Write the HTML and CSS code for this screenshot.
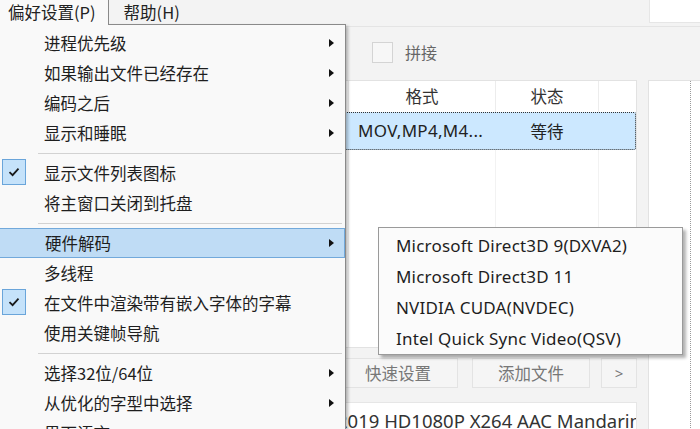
FILE: index.html
```html
<!DOCTYPE html>
<html lang="zh-CN">
<head>
<meta charset="utf-8">
<title>偏好设置</title>
<link rel="stylesheet" href="styles.css">
</head>
<body>
<div class="window">
  <div class="menubar">
    <div class="mb-item mb-open">偏好设置(P)</div>
    <div class="mb-item">帮助(H)</div>
    <div class="mb-search"></div>
  </div>
  <div class="content">
    <div class="main">
      <div class="toolbar"><span class="cb"></span><span class="cb-label">拼接</span></div>
      <div class="table">
        <div class="row thead">
          <div class="c c-name"></div><div class="c c-fmt">格式</div><div class="c c-st">状态</div><div class="c c-x"></div>
        </div>
        <div class="row sel">
          <div class="c c-name"></div><div class="c c-fmt left">MOV,MP4,M4...</div><div class="c c-st">等待</div><div class="c c-x"></div>
        </div>
        <div class="row fill">
          <div class="c c-name"></div><div class="c c-fmt"></div><div class="c c-st"></div><div class="c c-x"></div>
        </div>
      </div>
      <div class="buttons">
        <div class="btn b1">快速设置</div>
        <div class="btn b2">添加文件</div>
        <div class="btn b3">&gt;</div>
      </div>
      <div class="field">2019 HD1080P X264 AAC Mandarin</div>
    </div>
    <div class="side"><div class="side-inner"></div></div>
  </div>

  <div class="menu">
    <div class="mi sub">进程优先级</div>
    <div class="mi sub">如果输出文件已经存在</div>
    <div class="mi sub">编码之后</div>
    <div class="mi sub">显示和睡眠</div>
    <div class="sep"></div>
    <div class="mi checked"><span class="chk"><svg width="12" height="10" viewBox="0 0 12 10"><path d="M1.5 5.2 L4.6 8.2 L10.5 1.6" fill="none" stroke="#1a1a1a" stroke-width="1.8"/></svg></span>显示文件列表图标</div>
    <div class="mi">将主窗口关闭到托盘</div>
    <div class="sep"></div>
    <div class="mi sub hot">硬件解码</div>
    <div class="mi">多线程</div>
    <div class="mi checked"><span class="chk"><svg width="12" height="10" viewBox="0 0 12 10"><path d="M1.5 5.2 L4.6 8.2 L10.5 1.6" fill="none" stroke="#1a1a1a" stroke-width="1.8"/></svg></span>在文件中渲染带有嵌入字体的字幕</div>
    <div class="mi">使用关键帧导航</div>
    <div class="sep"></div>
    <div class="mi sub">选择32位/64位</div>
    <div class="mi sub">从优化的字型中选择</div>
    <div class="mi">界面语言</div>
  </div>

  <div class="submenu">
    <div class="si">Microsoft Direct3D 9(DXVA2)</div>
    <div class="si">Microsoft Direct3D 11</div>
    <div class="si">NVIDIA CUDA(NVDEC)</div>
    <div class="si">Intel Quick Sync Video(QSV)</div>
  </div>
</div>
</body>
</html>
```

FILE: styles.css
```css
html, body {
  margin: 0;
  padding: 0;
}
body {
  width: 700px;
  height: 429px;
  overflow: hidden;
  background: #f3f3f3;
  font-family: "Noto Sans", "Noto Sans CJK SC", sans-serif;
  color: #222;
}
.window {
  position: relative;
  width: 700px;
  height: 429px;
  overflow: hidden;
  background: #f3f3f3;
}
.menubar {
  display: flex;
  align-items: flex-start;
  height: 26px;
  border-bottom: 1px solid #e4e4e4;
  background: #f3f3f3;
  font-family: "Noto Sans CJK SC", sans-serif;
  font-size: 16.5px;
}
.mb-item {
  height: 24px;
  line-height: 24px;
  padding: 0 12px 0 15px;
  color: #222;
}
.mb-open {
  position: relative;
  z-index: 12;
  height: 25px;
  margin-left: -8px;
  padding: 0 12px 0 16px;
  background: #f9f9f9;
  border-right: 1px solid #8a8a8a;
}
.mb-search {
  margin-left: auto;
  width: 50px;
  height: 22px;
  background: #fff;
  border-left: 1px solid #e6e6e6;
  border-bottom: 1px solid #e6e6e6;
}
.content {
  display: grid;
  grid-template-columns: 637px 52px;
  column-gap: 11px;
  height: 402px;
}
.main {
  display: flex;
  flex-direction: column;
}
.toolbar {
  height: 53px;
  display: flex;
  align-items: center;
  padding-left: 372px;
  box-sizing: border-box;
  padding-bottom: 3px;
}
.cb {
  width: 19px;
  height: 19px;
  border: 1px solid #d4d4d4;
  background: #f7f7f7;
}
.cb-label {
  margin-left: 12px;
  font-family: "Noto Sans CJK SC", sans-serif;
  font-size: 16px;
  color: #666;
}
.table {
  height: 268px;
  display: flex;
  flex-direction: column;
  background: #fff;
  border: 1px solid #e2e2e2;
  box-sizing: border-box;
  font-family: "Noto Sans CJK SC", sans-serif;
  font-size: 16.5px;
}
.row {
  display: flex;
}
.c {
  box-sizing: border-box;
  text-align: center;
  border-right: 1px solid #ececec;
}
.c-name { width: 348px; }
.c-fmt { width: 147px; }
.c-st { width: 103px; }
.c-x { flex: 1; border-right: none; }
.thead {
  height: 31px;
  line-height: 31px;
  color: #333;
}
.sel {
  height: 38px;
  line-height: 38px;
  background: #cce8ff;
  outline: 1px dotted #333;
  outline-offset: -1px;
  border-radius: 2px;
}
.sel .c { border-right-color: transparent; }
.left {
  text-align: left;
  padding-left: 9px;
  font-family: "Noto Sans", "Noto Sans CJK SC", sans-serif;
  font-size: 17px;
  letter-spacing: 0.3px;
  white-space: nowrap;
}
.fill {
  flex: 1;
}
.fill .c { border-right-color: #f2f2f2; }
.buttons {
  display: flex;
  justify-content: flex-end;
  margin-top: 10px;
  height: 30px;
}
.btn {
  box-sizing: border-box;
  height: 30px;
  line-height: 28px;
  text-align: center;
  background: #f5f5f5;
  border: 1px solid #e3e3e3;
  color: #777;
  font-family: "Noto Sans CJK SC", sans-serif;
  font-size: 16.5px;
}
.b1 { width: 120px; }
.b2 { width: 118px; margin-left: 14px; }
.b3 { width: 36px; margin-left: 11px; font-family: "Noto Sans", sans-serif; font-size: 15px; }
.field {
  margin-top: 14px;
  height: 40px;
  background: #fff;
  border: 1px solid #e6e6e6;
  box-sizing: border-box;
  padding-left: 336px;
  line-height: 36px;
  font-family: "Noto Sans", sans-serif;
  font-size: 18.5px;
  color: #333;
  white-space: nowrap;
  overflow: hidden;
}
.side {
  margin-top: 53px;
  background: #fff;
  border-left: 1px solid #e2e2e2;
  border-top: 1px solid #e2e2e2;
}
.side-inner {
  margin-left: 41px;
  height: 100%;
  border-left: 1px dotted #9a9a9a;
}

/* popup menu */
.menu {
  position: absolute;
  z-index: 10;
  left: -2px;
  top: 24px;
  width: 348px;
  box-sizing: border-box;
  padding-top: 3px;
  padding-bottom: 20px;
  background: #f9f9f9;
  border: 1px solid #8a8a8a;
  box-shadow: 2px 2px 3px rgba(0, 0, 0, 0.28);
  font-family: "Noto Sans CJK SC", sans-serif;
  font-size: 16.5px;
  color: #1e1e1e;
}
.mi {
  position: relative;
  height: 30px;
  line-height: 30px;
  padding-left: 45px;
  box-sizing: border-box;
  white-space: nowrap;
}
.mi.sub::after {
  content: "";
  position: absolute;
  right: 11px;
  top: 11px;
  border-left: 5px solid #111;
  border-top: 4px solid transparent;
  border-bottom: 4px solid transparent;
}
.mi.hot {
  margin-left: -1px;
  background: #bfdcf5;
  border: 1px solid #72a9db;
  line-height: 28px;
  padding-left: 46px;
}
.mi.hot::after { right: 10px; top: 10px; }
.chk {
  position: absolute;
  left: 3px;
  top: 1px;
  width: 24px;
  height: 26px;
  box-sizing: border-box;
  background: #c5e2fa;
  border: 1px solid #6aa5da;
  display: flex;
  align-items: center;
  justify-content: center;
}
.sep {
  height: 10px;
  display: flex;
  align-items: center;
  padding-left: 39px;
  padding-right: 3px;
}
.sep::before {
  content: "";
  flex: 1;
  height: 1px;
  background: #d2d2d2;
}

/* submenu */
.submenu {
  position: absolute;
  z-index: 11;
  left: 378px;
  top: 227px;
  width: 305px;
  height: 128px;
  box-sizing: border-box;
  padding-top: 2px;
  background: #fbfbfb;
  border: 1px solid #9a9a9a;
  box-shadow: 3px 3px 3px rgba(0, 0, 0, 0.3);
  font-family: "Noto Sans", sans-serif;
  font-size: 17px;
  letter-spacing: 0.2px;
  color: #1e1e1e;
}
.si {
  height: 31px;
  line-height: 31px;
  padding-left: 17px;
  white-space: nowrap;
}
```
